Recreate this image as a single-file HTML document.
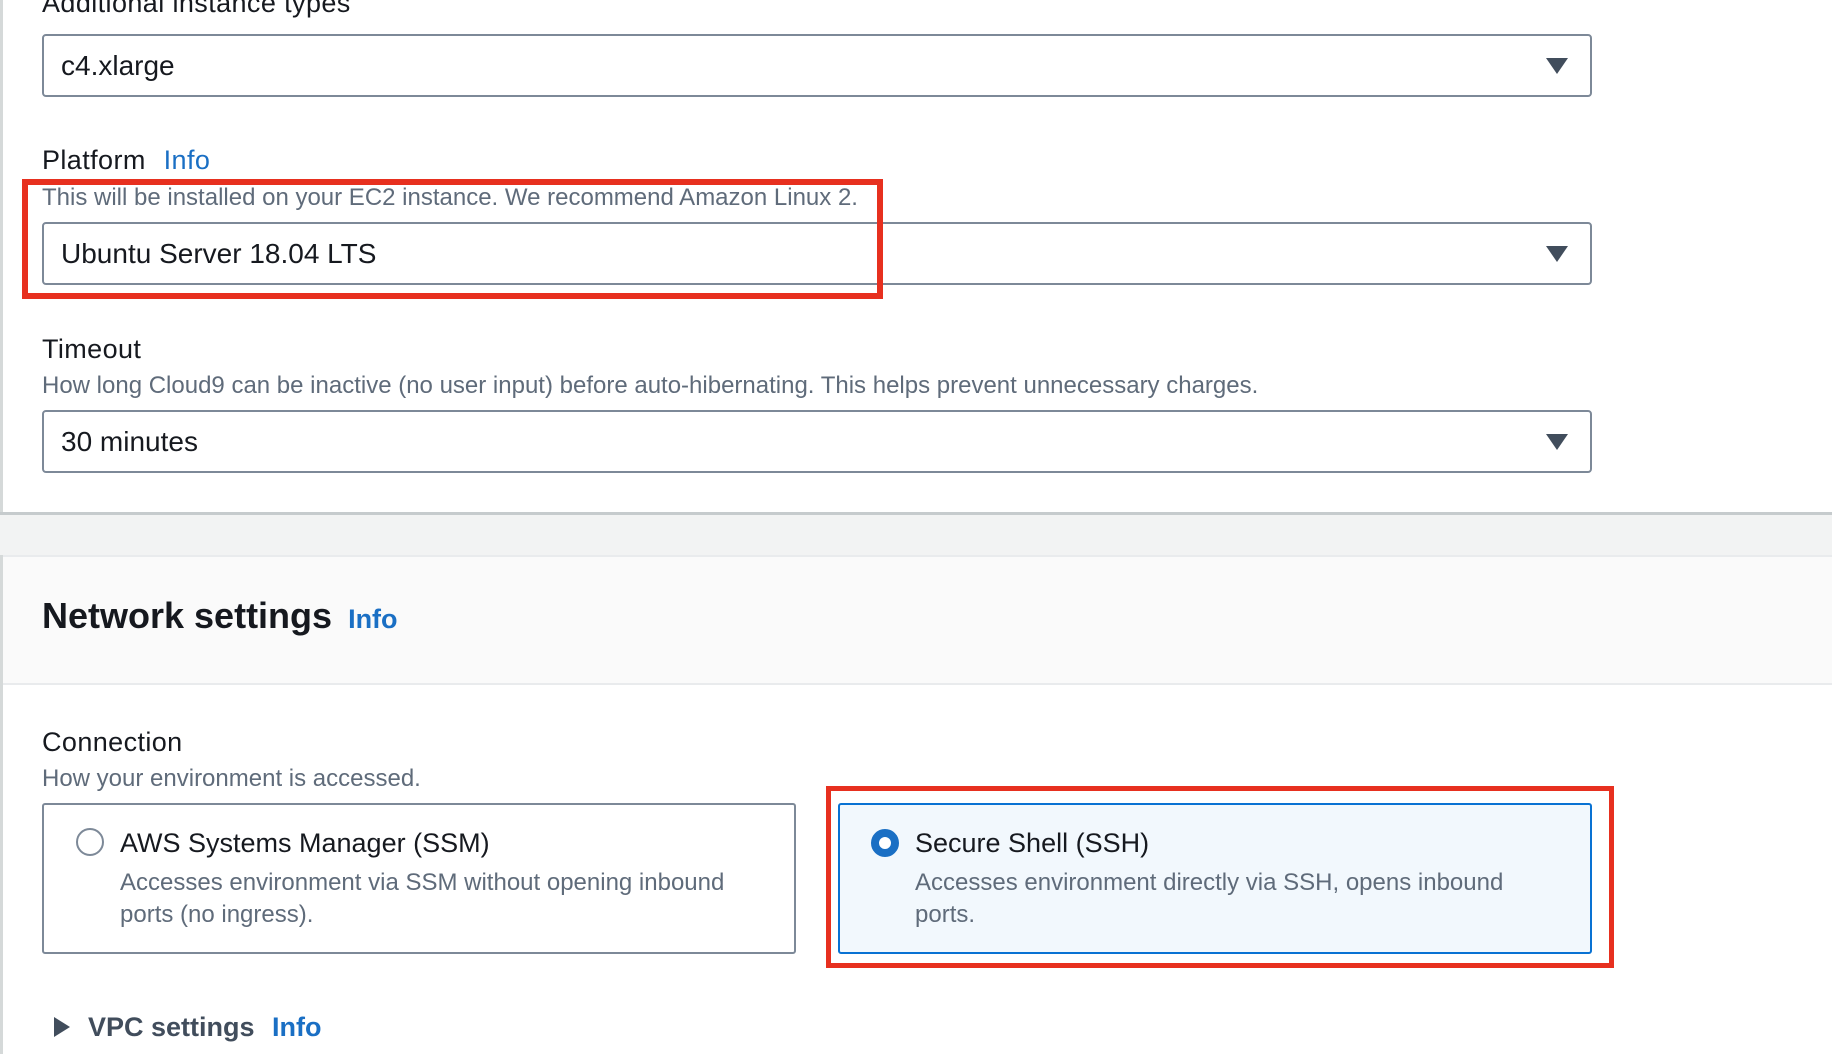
<!DOCTYPE html>
<html><head><meta charset="utf-8"><style>
*{margin:0;padding:0;box-sizing:border-box}
body{width:1832px;height:1054px;overflow:hidden;background:#fff;font-family:"Liberation Sans",Arial,sans-serif;position:relative;color:#16191f}
.a{position:absolute;white-space:nowrap}
.lbl{font-size:27px;letter-spacing:0.4px;color:#16191f;line-height:30px}
.hlp{font-size:24px;color:#5f6b7a;line-height:28px}
.sel{position:absolute;left:42px;width:1550px;height:63px;border:2px solid #7d8998;border-radius:4px;background:#fff}
.sel span{position:absolute;left:17px;top:0;line-height:59px;font-size:28px;color:#16191f}
.sel i{position:absolute;right:22px;top:22px;width:0;height:0;border-left:11px solid transparent;border-right:11px solid transparent;border-top:16px solid #414d5c}
.info{color:#1a6fc4}
.red{position:absolute;border:6px solid #e7301f}
</style></head><body>
<div class="a" style="left:0;top:0;width:3px;height:514px;background:#d5d9d9"></div>
<div class="a lbl" style="left:42px;top:-12px">Additional instance types</div>
<div class="sel" style="top:34px"><span>c4.xlarge</span><i></i></div>

<div class="a lbl" style="left:42px;top:145px">Platform <span class="info" style="margin-left:10px">Info</span></div>
<div class="a hlp" style="left:42px;top:184px">This will be installed on your EC2 instance. We recommend Amazon Linux 2.</div>
<div class="sel" style="top:222px"><span>Ubuntu Server 18.04 LTS</span><i></i></div>
<div class="red" style="left:22px;top:179px;width:861px;height:120px"></div>

<div class="a lbl" style="left:42px;top:334px">Timeout</div>
<div class="a hlp" style="left:42px;top:372px">How long Cloud9 can be inactive (no user input) before auto-hibernating. This helps prevent unnecessary charges.</div>
<div class="sel" style="top:410px"><span>30 minutes</span><i></i></div>

<div class="a" style="left:0;top:512px;width:1832px;height:3px;background:#c6cbcd"></div>
<div class="a" style="left:0;top:515px;width:1832px;height:40px;background:#f2f3f3"></div>
<div class="a" style="left:0;top:555px;width:1832px;height:130px;background:#fafafa;border-top:2px solid #e9ebed;border-bottom:2px solid #e9ebed"></div>
<div class="a" style="left:0;top:555px;width:3px;height:499px;background:#d5d9d9"></div>
<div class="a" style="left:42px;top:594px;font-size:36px;font-weight:bold;line-height:44px;color:#16191f">Network settings <span class="info" style="font-size:27px;margin-left:6px">Info</span></div>

<div class="a lbl" style="left:42px;top:727px">Connection</div>
<div class="a hlp" style="left:42px;top:765px">How your environment is accessed.</div>

<div class="a" style="left:42px;top:803px;width:754px;height:151px;border:2px solid #7d8998;border-radius:3px;background:#fff"></div>
<div class="a" style="left:76px;top:828px;width:28px;height:28px;border:2px solid #7d8998;border-radius:50%"></div>
<div class="a" style="left:120px;top:827px;font-size:27px;line-height:32px">AWS Systems Manager (SSM)</div>
<div class="a hlp" style="left:120px;top:867px;line-height:32px">Accesses environment via SSM without opening inbound<br>ports (no ingress).</div>

<div class="a" style="left:838px;top:803px;width:754px;height:151px;border:2px solid #0972d3;border-radius:3px;background:#f2f8fd"></div>
<div class="a" style="left:871px;top:829px;width:28px;height:28px;border:8.5px solid #1a6fc4;border-radius:50%;background:#fff"></div>
<div class="a" style="left:915px;top:827px;font-size:27px;line-height:32px">Secure Shell (SSH)</div>
<div class="a hlp" style="left:915px;top:867px;line-height:32px">Accesses environment directly via SSH, opens inbound<br>ports.</div>
<div class="red" style="left:826px;top:786px;width:788px;height:182px;border-width:5px"></div>

<div class="a" style="left:54px;top:1017px;width:0;height:0;border-top:10px solid transparent;border-bottom:10px solid transparent;border-left:16px solid #414d5c"></div>
<div class="a" style="left:88px;top:1010px;font-size:27px;font-weight:bold;line-height:34px;color:#414d5c">VPC settings <span class="info" style="margin-left:10px">Info</span></div>
</body></html>
